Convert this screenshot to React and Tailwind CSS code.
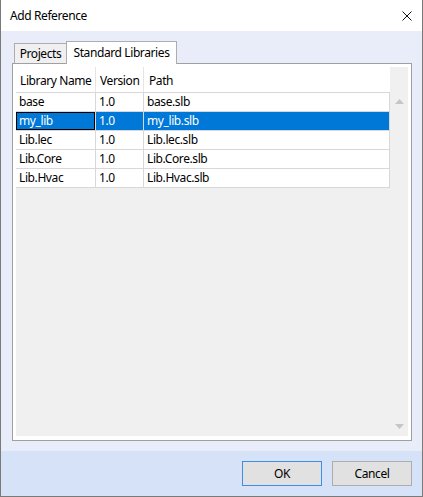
import React from "react";

const rows = [
  { name: "base", ver: "1.0", path: "base.slb" },
  { name: "my_lib", ver: "1.0", path: "my_lib.slb", sel: true },
  { name: "Lib.lec", ver: "1.0", path: "Lib.lec.slb" },
  { name: "Lib.Core", ver: "1.0", path: "Lib.Core.slb" },
  { name: "Lib.Hvac", ver: "1.0", path: "Lib.Hvac.slb" },
];

export default function App() {
  return (
    <div className="w-[423px] h-[497px] flex flex-col border-x border-b border-[#7a7a7a] bg-white text-[12px] leading-[16px] tracking-[-0.4px] whitespace-nowrap text-black font-['Noto_Sans',sans-serif] overflow-hidden">
      {/* title bar */}
      <div className="h-[31px] shrink-0 flex items-center justify-between pl-[9px] pr-[10px] bg-white">
        <span className="text-[12px]">Add Reference</span>
        <svg width="10" height="10" viewBox="0 0 10 10" className="block">
          <path d="M0.5 0.5 L9.5 9.5 M9.5 0.5 L0.5 9.5" stroke="#111" strokeWidth="1" fill="none" />
        </svg>
      </div>

      {/* content */}
      <div className="h-[420px] shrink-0 bg-[#e9edf9] pl-[11px] pr-[10px] pt-[10px] pb-[10px] flex flex-col">
        {/* tabs */}
        <div className="h-[22px] shrink-0 flex items-end pl-[2px]">
          <div className="h-[20px] w-[52px] bg-[#f0f0f0] border-l border-t border-[#adadad] flex items-center justify-center pt-[1px]">
            Projects
          </div>
          <div className="relative z-10 h-[23px] -mb-[1px] w-[111px] bg-white border-l border-t border-r border-[#adadad] flex items-center justify-center pb-[1px]">
            Standard Libraries
          </div>
        </div>

        {/* panel */}
        <div className="h-[378px] shrink-0 border border-[#a0a0a0] bg-white pt-[3px] px-[3px] pb-[4px]">
          <div className="h-full flex bg-[#f0f0f0]">
            <div className="w-[374px] flex flex-col">
              {/* header */}
              <div className="h-[26px] flex bg-white border-b border-[#d8d8d8]">
                <div className="w-[80px] border-r border-[#e5e5e5] pl-[4px] pt-[6px]">Library Name</div>
                <div className="w-[48px] border-r border-[#e5e5e5] pl-[4px] pt-[6px]">Version</div>
                <div className="flex-1 pl-[5px] pt-[6px]">Path</div>
              </div>
              {rows.map((r) => (
                <div
                  key={r.name}
                  className={
                    r.sel
                      ? "h-[19px] flex border-b border-[#d8d8d8] bg-[#0078d7] text-white"
                      : "h-[19px] flex border-b border-[#d8d8d8] bg-white"
                  }
                >
                  <div
                    className={
                      r.sel
                        ? "w-[80px] border-r border-[#d8d8d8] pl-[3px] flex items-center shadow-[inset_0_0_0_1px_#000]"
                        : "w-[80px] border-r border-[#d8d8d8] pl-[3px] flex items-center"
                    }
                  >
                    {r.name}
                  </div>
                  <div className="w-[48px] border-r border-[#d8d8d8] pl-[3px] flex items-center">{r.ver}</div>
                  <div className="w-[246px] border-r border-[#d8d8d8] pl-[3px] flex items-center">{r.path}</div>
                </div>
              ))}
            </div>
            {/* scrollbar */}
            <div className="w-[18px] flex flex-col justify-between items-center pt-[32px] pb-[7px]">
              <svg width="9" height="5" viewBox="0 0 9 5" className="block">
                <path d="M4.5 0 L9 5 L0 5 Z" fill="#c6c6c6" />
              </svg>
              <svg width="9" height="5" viewBox="0 0 9 5" className="block">
                <path d="M0 0 L9 0 L4.5 5 Z" fill="#c6c6c6" />
              </svg>
            </div>
          </div>
        </div>
      </div>

      {/* footer */}
      <div className="flex-1 bg-[#d5e2f7] flex items-center justify-end gap-[10px] pr-[10px]">
        <button className="w-[80px] h-[25px] bg-[#e1e1e1] border border-[#3c8ee6] flex items-center justify-center">
          OK
        </button>
        <button className="w-[80px] h-[25px] bg-[#e1e1e1] border border-[#adadad] flex items-center justify-center">
          Cancel
        </button>
      </div>
    </div>
  );
}
